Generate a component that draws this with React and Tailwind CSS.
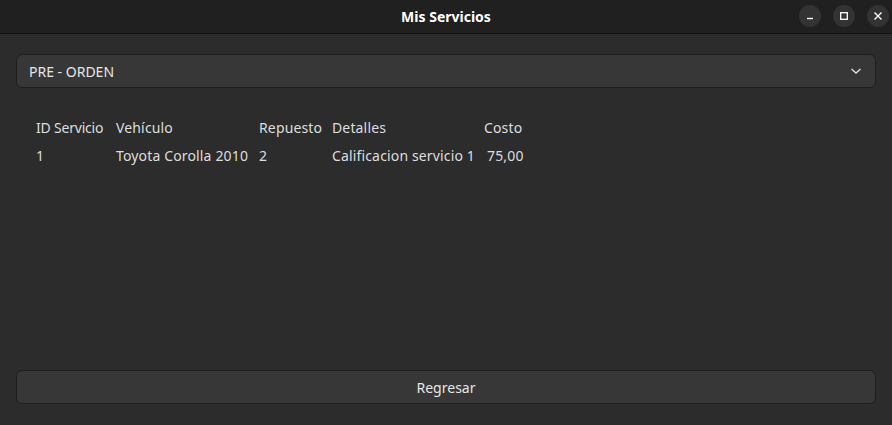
export default function App() {
  const font = { fontFamily: '"Noto Sans", "Open Sans", sans-serif' };
  return (
    <div className="w-[892px] h-[425px] bg-[#2c2c2c] flex flex-col text-[#dedede] overflow-hidden" style={font}>
      <div className="h-[34px] shrink-0 bg-[#202020] border-b border-[#121212] flex items-center relative">
        <div className="flex-1 text-center text-[14px] font-bold text-white">Mis Servicios</div>
        <div className="absolute right-[3px] top-[5px] flex gap-[12px]">
          <div className="w-[22px] h-[22px] rounded-full bg-[#333333] flex items-center justify-center">
            <svg width="10" height="10" viewBox="0 0 10 10"><path d="M2 7.5H8" stroke="#fff" strokeWidth="1.4" /></svg>
          </div>
          <div className="w-[22px] h-[22px] rounded-full bg-[#333333] flex items-center justify-center">
            <svg width="10" height="10" viewBox="0 0 10 10"><rect x="1.7" y="1.7" width="6.6" height="6.6" fill="none" stroke="#fff" strokeWidth="1.3" /></svg>
          </div>
          <div className="w-[22px] h-[22px] rounded-full bg-[#333333] flex items-center justify-center">
            <svg width="10" height="10" viewBox="0 0 10 10"><path d="M1.5 1.5L8.5 8.5M8.5 1.5L1.5 8.5" stroke="#fff" strokeWidth="1.4" /></svg>
          </div>
        </div>
      </div>
      <div className="flex-1 flex flex-col px-[16px] pt-[20px] pb-[21px]">
        <div className="h-[34px] rounded-[6px] bg-[#373737] border border-[#1e1e1e] flex items-center pl-[12px] pr-[12px]">
          <span className="flex-1 text-[14px] text-[#e6e6e6]">PRE - ORDEN</span>
          <svg width="14" height="14" viewBox="0 0 14 14"><path d="M2.5 5L7 9L11.5 5" fill="none" stroke="#dedede" strokeWidth="1.5" /></svg>
        </div>
        <div className="mt-[26px] pl-[20px] text-[14px] leading-[28px]">
          <div className="grid grid-cols-[80px_143px_73px_152px_40px] whitespace-nowrap tracking-[0.15px]">
            <div className="tracking-[-0.2px]">ID Servicio</div>
            <div>Vehículo</div>
            <div>Repuesto</div>
            <div>Detalles</div>
            <div>Costo</div>
            <div>1</div>
            <div>Toyota Corolla 2010</div>
            <div>2</div>
            <div>Calificacion servicio 1</div>
            <div className="pl-[3px]">75,00</div>
          </div>
        </div>
        <div className="flex-1" />
        <div className="h-[34px] rounded-[6px] bg-[#373737] border border-[#1e1e1e] flex items-center justify-center text-[14px] text-[#e6e6e6]">
          Regresar
        </div>
      </div>
    </div>
  );
}
